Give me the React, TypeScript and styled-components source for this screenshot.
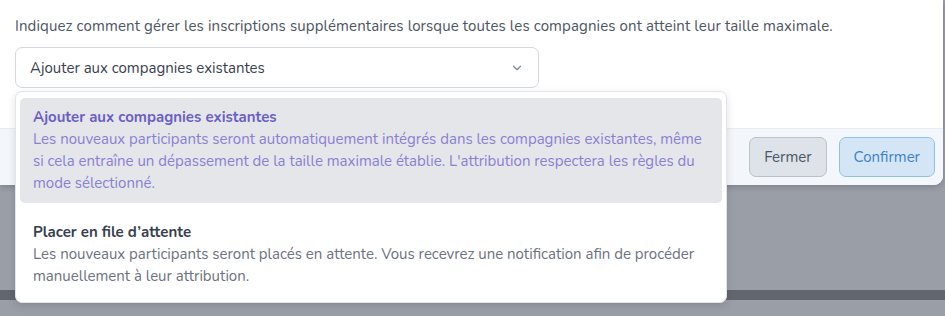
import React from 'react';
import styled, { createGlobalStyle } from 'styled-components';

const GlobalStyle = createGlobalStyle`
  html, body {
    margin: 0;
    padding: 0;
    background: #9a9ea7;
    font-family: 'Nunito', Lato, 'Noto Sans', sans-serif;
  }
`;

const Screen = styled.div`
  width: 945px;
  height: 316px;
  overflow: hidden;
  display: flex;
  flex-direction: column;
`;

const Modal = styled.div`
  margin-right: 2px;
  border-radius: 0 0 9px 0;
  background: #fff;
  box-shadow: 0 2px 6px rgba(0, 0, 0, 0.18);
  display: flex;
  flex-direction: column;
`;

const Body = styled.div`
  height: 128px;
  box-sizing: border-box;
  padding: 15px 15px 0;
`;

const Hint = styled.p`
  margin: 0 0 10px;
  font-size: 15px;
  line-height: 22px;
  letter-spacing: 0.12px;
  color: #4b5563;
`;

const SelectWrap = styled.div`
  position: relative;
  width: 524px;
`;

const SelectBox = styled.div`
  height: 41px;
  box-sizing: border-box;
  border: 1px solid #d4d9e0;
  border-radius: 7px;
  padding: 0 14px;
  display: flex;
  align-items: center;
  justify-content: space-between;
  font-size: 15px;
  color: #374151;
`;

const Menu = styled.ul`
  position: absolute;
  top: 44px;
  left: 0;
  width: 712px;
  margin: 0;
  padding: 6px 4px 6px;
  box-sizing: border-box;
  list-style: none;
  background: #fff;
  border: 1px solid #e2e5ea;
  border-radius: 7px;
  box-shadow: 0 3px 8px rgba(0, 0, 0, 0.12);
  z-index: 10;
`;

const Option = styled.li<{ $active?: boolean }>`
  padding: 8px 13px 9px;
  border-radius: 5px;
  background: ${(p) => (p.$active ? '#e5e6ea' : 'transparent')};
  & + & {
    margin-top: 10px;
  }
`;

const OptionTitle = styled.div<{ $active?: boolean }>`
  font-size: 15px;
  line-height: 22px;
  font-weight: 700;
  color: ${(p) => (p.$active ? '#6a5fc4' : '#374151')};
`;

const OptionText = styled.div<{ $active?: boolean }>`
  font-size: 15px;
  line-height: 22px;
  color: ${(p) => (p.$active ? '#8a80d2' : '#6b7280')};
`;

const Footer = styled.div`
  height: 57px;
  box-sizing: border-box;
  background: #f3f6fa;
  border-top: 1px solid #e8ebef;
  border-radius: 0 0 9px 0;
  padding: 0 8px 0 0;
  display: flex;
  align-items: center;
  justify-content: flex-end;
  gap: 12px;
`;

const Button = styled.button<{ $primary?: boolean }>`
  height: 40px;
  padding: 0 14px;
  border-radius: 7px;
  font-family: inherit;
  font-size: 15px;
  border: 1px solid ${(p) => (p.$primary ? '#8fc2ea' : '#b9c2cb')};
  background: ${(p) => (p.$primary ? '#d4e6f6' : '#dde3e9')};
  color: ${(p) => (p.$primary ? '#3b82c4' : '#4b5563')};
`;

const Backdrop = styled.div`
  flex: 1;
  display: flex;
  flex-direction: column;
`;

const Gap = styled.div`
  height: 105px;
`;

const Strip = styled.div`
  height: 10px;
  background: #62666e;
`;

const Chevron = () => (
  <svg width="14" height="14" viewBox="0 0 24 24" fill="none" stroke="#7b8592" strokeWidth="2" strokeLinecap="round" strokeLinejoin="round">
    <path d="M6 9l6 6 6-6" />
  </svg>
);

const App: React.FC = () => {
  return (
    <Screen>
      <GlobalStyle />
      <Modal>
        <Body>
          <Hint>
            Indiquez comment gérer les inscriptions supplémentaires lorsque toutes les compagnies ont atteint leur taille maximale.
          </Hint>
          <SelectWrap>
            <SelectBox>
              <span>Ajouter aux compagnies existantes</span>
              <Chevron />
            </SelectBox>
            <Menu>
              <Option $active>
                <OptionTitle $active>Ajouter aux compagnies existantes</OptionTitle>
                <OptionText $active>
                  Les nouveaux participants seront automatiquement intégrés dans les compagnies existantes, même si cela entraîne un dépassement de la taille maximale établie. L'attribution respectera les règles du mode sélectionné.
                </OptionText>
              </Option>
              <Option>
                <OptionTitle>Placer en file d’attente</OptionTitle>
                <OptionText>
                  Les nouveaux participants seront placés en attente. Vous recevrez une notification afin de procéder manuellement à leur attribution.
                </OptionText>
              </Option>
            </Menu>
          </SelectWrap>
        </Body>
        <Footer>
          <Button>Fermer</Button>
          <Button $primary>Confirmer</Button>
        </Footer>
      </Modal>
      <Backdrop>
        <Gap />
        <Strip />
      </Backdrop>
    </Screen>
  );
};

export default App;
